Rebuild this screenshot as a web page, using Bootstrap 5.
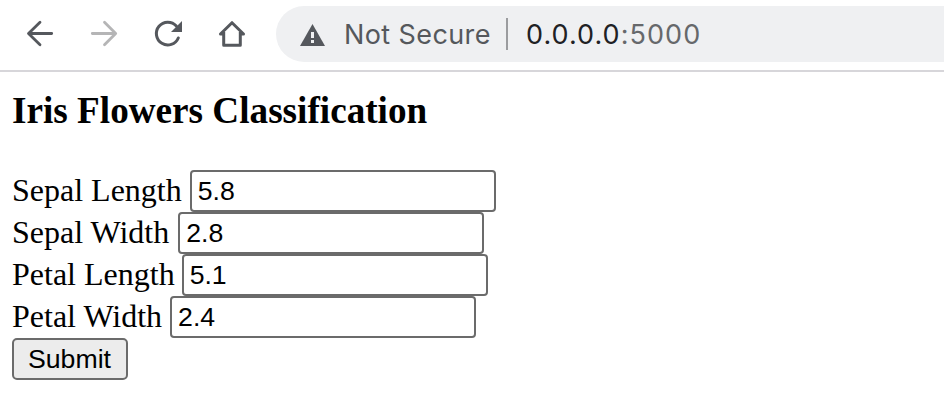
<!DOCTYPE html>
<html lang="en">
<head>
<meta charset="utf-8">
<meta name="viewport" content="width=device-width, initial-scale=1">
<title>Iris Flowers Classification</title>
<link href="https://cdn.jsdelivr.net/npm/bootstrap@5.3.0/dist/css/bootstrap.min.css" rel="stylesheet">
<style>
body { font-family: "Liberation Serif", "Times New Roman", serif; font-size: 32px; line-height: 42px; color: #000; background: #fff; overflow: hidden; }
.toolbar { height: 72px; border-bottom: 2px solid #d7d6da; padding: 6px 0 8px 20px; font-family: Inter, sans-serif; font-size: 27px; }
.tool-icon { width: 40px; height: 40px; margin-right: 24px; flex: none; }
.omnibox { height: 56px; background: #eff0f2; border-radius: 28px 0 0 28px; color: #55585c; padding-left: 24px; }
.warn-icon { width: 25px; height: 22px; margin: 1px 19px 0 0; }
.security { width: 162px; letter-spacing: .4px; padding-top: 2px; }
.divider { width: 2px; height: 32px; background: #9b9c9f; margin-right: 18px; }
.address { color: #66686b; letter-spacing: 1.05px; padding-top: 2px; }
.host { color: #202124; }
.page { padding: 18px 12px 0; }
.title { font-size: 37.2px; line-height: 42px; font-weight: 700; margin: 0 0 38px; }
.field-row { height: 42px; }
.field-row label { margin-right: 8px; padding-bottom: 2px; }
.field-row label[for="sw"] { margin-right: 9px; }
.field-row label[for="pl"] { margin-right: 7px; }
.field { width: 306px; height: 42px; border: 2px solid #6b6b6b; border-radius: 4px; padding: 0 6px; font: 26.667px/38px "Liberation Sans", Arial, sans-serif; color: #000; background: #fff; }
.submit { width: 116px; height: 42px; border: 2px solid #6b6b6b; border-radius: 5px; padding: 0 1px 0 0; font: 26.667px/38px "Liberation Sans", Arial, sans-serif; color: #000; background: #ececec; }
</style>
</head>
<body>
<header class="toolbar d-flex align-items-center">
  <svg class="tool-icon" viewBox="0 0 40 40" fill="none" stroke="#55585d" stroke-width="2.8" stroke-linecap="round" stroke-linejoin="round"><path d="M31.7 19.5H8.7M20 8.2L8.5 19.5L20 30.8"/></svg>
  <svg class="tool-icon" viewBox="0 0 40 40" fill="none" stroke="#b5b5b6" stroke-width="2.8" stroke-linecap="round" stroke-linejoin="round"><path d="M8.3 19.5H31.3M20.5 8.2L31.7 19.5L20.5 30.8"/></svg>
  <svg class="tool-icon" viewBox="0 0 40 40"><path d="M30.3 24A11.4 11.4 0 1 1 28.3 12" fill="none" stroke="#55585d" stroke-width="3" stroke-linecap="round"/><path d="M34 7V18H23Z" fill="#55585d"/></svg>
  <svg class="tool-icon" viewBox="0 0 40 40" fill="none" stroke="#55585d" stroke-width="3" stroke-linecap="round" stroke-linejoin="round"><path d="M8.5 20L20 8.7L31.5 20M11.7 18V31.3H28.3V18M8.5 20H11.7M28.3 20H31.5"/></svg>
  <div class="omnibox d-flex align-items-center flex-grow-1">
    <svg class="warn-icon" viewBox="0 0 25 22"><path d="M12.5 0L25 22H0Z" fill="#55585d"/><path d="M11 8h3v6h-3zM11 16h3v3h-3z" fill="#eff0f2"/></svg>
    <span class="security text-nowrap">Not Secure</span>
    <span class="divider"></span>
    <span class="address text-nowrap"><span class="host">0.0.0.0</span>:5000</span>
  </div>
</header>
<main class="page">
  <h3 class="title">Iris Flowers Classification</h3>
  <form>
    <div class="field-row d-flex align-items-center"><label for="sl">Sepal Length</label><input id="sl" class="field" type="text" value="5.8"></div>
    <div class="field-row d-flex align-items-center"><label for="sw">Sepal Width</label><input id="sw" class="field" type="text" value="2.8"></div>
    <div class="field-row d-flex align-items-center"><label for="pl">Petal Length</label><input id="pl" class="field" type="text" value="5.1"></div>
    <div class="field-row d-flex align-items-center"><label for="pw">Petal Width</label><input id="pw" class="field" type="text" value="2.4"></div>
    <button class="submit d-block" type="button">Submit</button>
  </form>
</main>
<script src="https://cdn.jsdelivr.net/npm/bootstrap@5.3.0/dist/js/bootstrap.bundle.min.js"></script>
</body>
</html>
